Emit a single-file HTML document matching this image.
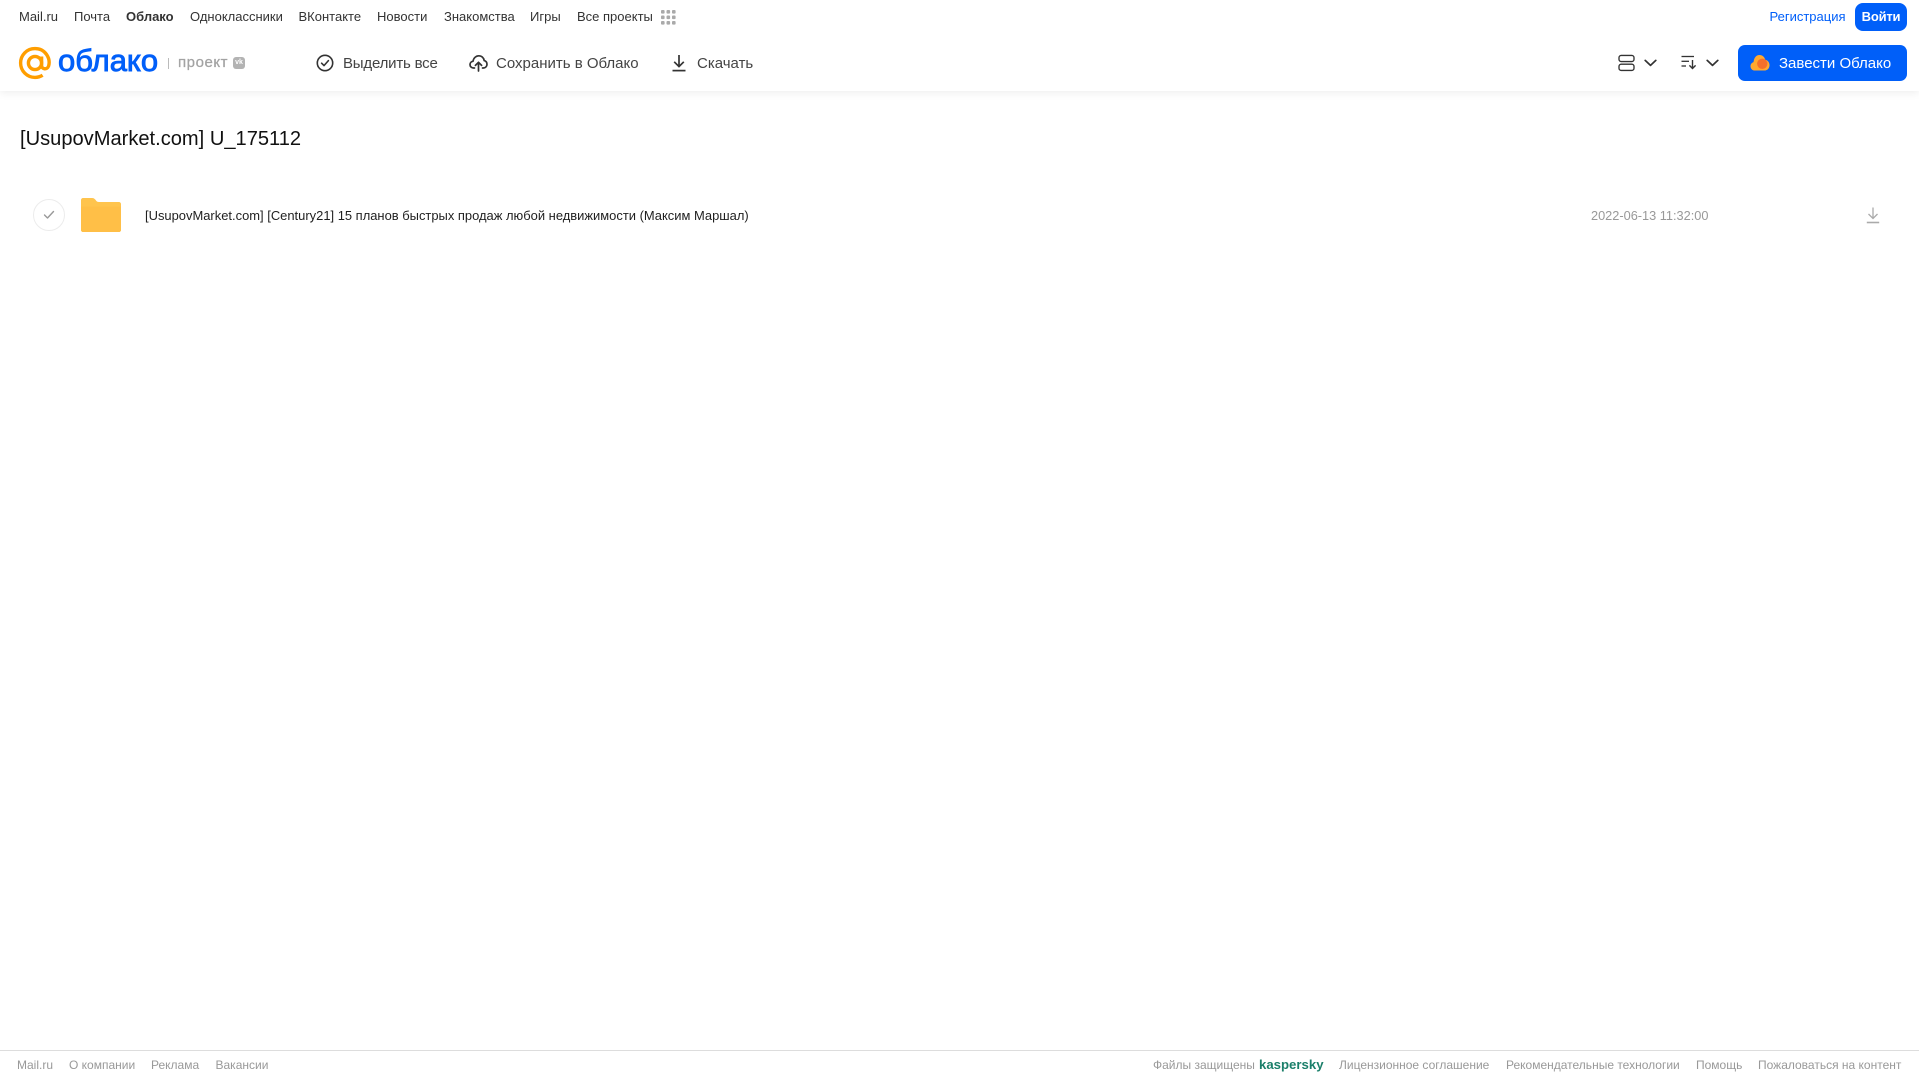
<!DOCTYPE html>
<html lang="ru">
<head>
<meta charset="utf-8">
<title>Облако</title>
<style>
html,body{margin:0;padding:0;background:#fff;}
body{width:1919px;height:1079px;position:relative;overflow:hidden;font-family:"Liberation Sans",Arial,sans-serif;}
.t{position:absolute;white-space:nowrap;line-height:20px;}
.n{font-size:13px;color:#333;top:7px;}
.a{font-size:15px;color:#444;top:54px;}
.f{font-size:12px;color:#999;top:1055px;}
svg{position:absolute;display:block;}
#hdr{position:absolute;left:0;top:0;width:1919px;height:91px;background:#fff;box-shadow:0 2px 8px rgba(0,0,0,.07);}
#ft{position:absolute;left:0;top:1050px;width:1919px;height:29px;border-top:1px solid #ddd;box-sizing:border-box;}
</style>
</head>
<body>
<div id="hdr"></div>

<div class="t n" style="left:19px">Mail.ru</div>
<div class="t n" style="left:74px">Почта</div>
<div class="t n" style="left:126px;font-weight:bold">Облако</div>
<div class="t n" style="left:190px">Одноклассники</div>
<div class="t n" style="left:298.5px">ВКонтакте</div>
<div class="t n" style="left:377px">Новости</div>
<div class="t n" style="left:444px">Знакомства</div>
<div class="t n" style="left:530px">Игры</div>
<div class="t n" style="left:577px">Все проекты</div>
<svg style="left:661px;top:10px" width="15" height="15" viewBox="0 0 15 15" fill="#aaa">
<rect x="0" y="0" width="3.6" height="3.6" rx="1"/><rect x="5.5" y="0" width="3.6" height="3.6" rx="1"/><rect x="11" y="0" width="3.6" height="3.6" rx="1"/>
<rect x="0" y="5.5" width="3.6" height="3.6" rx="1"/><rect x="5.5" y="5.5" width="3.6" height="3.6" rx="1"/><rect x="11" y="5.5" width="3.6" height="3.6" rx="1"/>
<rect x="0" y="11" width="3.6" height="3.6" rx="1"/><rect x="5.5" y="11" width="3.6" height="3.6" rx="1"/><rect x="11" y="11" width="3.6" height="3.6" rx="1"/>
</svg>

<div class="t n" style="left:1769.5px;color:#005ff9">Регистрация</div>
<div style="position:absolute;left:1855px;top:3px;width:52px;height:28px;border-radius:8px;background:#005ff9;color:#fff;font-size:13px;font-weight:bold;letter-spacing:-.2px;line-height:28px;text-align:center">Войти</div>

<svg style="left:18px;top:46px" width="34" height="34" viewBox="0 0 34 34" fill="none" stroke="#ff9e00" stroke-width="3.4">
<circle cx="17" cy="17" r="6.6"/>
<path d="M23.6 10.5V19.5C23.6 23.5 29.2 24 30.6 20C32.8 12.5 27.5 2.6 17 2.6C8.9 2.6 2.6 9 2.6 17C2.6 25 9 31.4 17 31.4C20 31.4 22.5 30.6 24.6 29.2"/>
</svg>
<div class="t" style="left:58px;top:45px;font-size:31px;line-height:32px;color:#005ff9;-webkit-text-stroke:.9px #005ff9">облако</div>
<div style="position:absolute;left:168px;top:58px;width:1px;height:11px;background:#bbb"></div>
<div class="t" style="left:178px;top:53px;font-size:15px;color:#a3a3a3;letter-spacing:.55px;-webkit-text-stroke:.25px #a3a3a3">проект</div>
<div style="position:absolute;left:233px;top:57px;width:12px;height:12px;border-radius:3px;background:#b3b3b3;color:#fff;font-size:7px;font-weight:bold;line-height:12px;text-align:center">vk</div>

<svg style="left:316px;top:54px" width="18" height="18" viewBox="0 0 18 18" fill="none" stroke="#333" stroke-width="1.6">
<circle cx="9" cy="9" r="7.7"/><path d="M5.6 9.2L8 11.6L12.4 6.6" stroke-linecap="round" stroke-linejoin="round"/>
</svg>
<div class="t a" style="left:343px;letter-spacing:-.2px">Выделить все</div>

<svg style="left:469px;top:54px" width="19" height="18" viewBox="0 0 19 18" fill="none" stroke="#333" stroke-width="1.7" stroke-linecap="round" stroke-linejoin="round">
<path d="M5.5 14H4.6C2.5 14 1 12.5 1 10.6C1 8.8 2.4 7.5 4 7.3C4.5 4 7 1.8 9.8 1.8C12.6 1.8 14.8 3.8 15.2 6.6C16.9 7.1 18 8.6 18 10.3C18 12.4 16.4 14 14.3 14H13.5"/>
<path d="M9.5 17V8.5M6.4 11.4L9.5 8.3L12.6 11.4"/>
</svg>
<div class="t a" style="left:496px">Сохранить в Облако</div>

<svg style="left:672px;top:54px" width="14" height="18" viewBox="0 0 14 18" fill="none" stroke="#333" stroke-width="1.7">
<path d="M7 1V12.5M2.2 7.8L7 12.6L11.8 7.8"/><path d="M.5 16.6H13.5"/>
</svg>
<div class="t a" style="left:697px">Скачать</div>

<svg style="left:1618px;top:54px" width="17" height="18" viewBox="0 0 17 18" fill="none" stroke="#333" stroke-width="1.35">
<rect x="1" y="1.4" width="15" height="6.2" rx="2.2"/><rect x="1" y="10.2" width="15" height="6.2" rx="2.2"/>
</svg>
<svg style="left:1643.5px;top:59px" width="13" height="8" viewBox="0 0 13 8" fill="none" stroke="#333" stroke-width="1.7" stroke-linecap="round" stroke-linejoin="round"><path d="M1.2 1.4L6.5 6.4L11.8 1.4"/></svg>
<svg style="left:1681px;top:55px" width="17" height="15" viewBox="0 0 17 15" fill="none" stroke="#333" stroke-width="1.3">
<path d="M.5 1.5H13"/><path d="M.5 6.3H8"/><path d="M.5 11H5"/><path d="M11.5 5V13.4M8.4 10.4L11.5 13.5L14.6 10.4" stroke-width="1.4"/>
</svg>
<svg style="left:1706px;top:59px" width="13" height="8" viewBox="0 0 13 8" fill="none" stroke="#333" stroke-width="1.7" stroke-linecap="round" stroke-linejoin="round"><path d="M1.2 1.4L6.5 6.4L11.8 1.4"/></svg>

<div style="position:absolute;left:1738px;top:45px;width:169px;height:36px;border-radius:7px;background:#005ff9"></div>
<svg style="left:1750px;top:54px" width="20" height="17" viewBox="0 0 20 17">
<path d="M5 16.5C2.2 16.5.5 14.6.5 12.2C.5 10.2 1.8 8.6 3.5 8.1C4 4 6 1 9.5 1C12.4 1 14.6 3 15.2 5.8C17.8 6.3 19.5 8.5 19.5 11.2C19.5 14.4 17.2 16.5 14.4 16.5Z" fill="#ffa930"/>
<circle cx="12.3" cy="9.8" r="5.2" fill="#f4702c"/>
</svg>
<div class="t" style="left:1779px;top:54px;font-size:15px;color:#fff">Завести Облако</div>

<div class="t" style="left:20px;top:127px;font-size:20.1px;line-height:24px;color:#111">[UsupovMarket.com] U_175112</div>

<div style="position:absolute;left:33px;top:199px;width:32px;height:32px;border:1px solid #ececec;border-radius:50%;box-sizing:border-box"></div>
<svg style="left:43px;top:210px" width="12" height="10" viewBox="0 0 12 10" fill="none" stroke="#999" stroke-width="1.4" stroke-linecap="round" stroke-linejoin="round"><path d="M1.5 5L4.5 8L10.5 1.5"/></svg>

<svg style="left:81px;top:198px" width="40" height="34" viewBox="0 0 40 34">
<path d="M2 0H11C13 0 14 1 15 2.5C15.6 3.5 16.5 4 18 4H38C39.1 4 40 4.9 40 6V32C40 33.1 39.1 34 38 34H2C.9 34 0 33.1 0 32V2C0 .9.9 0 2 0Z" fill="#ffc44d"/>
<path d="M0 8.5H40V32C40 33.1 39.1 34 38 34H2C.9 34 0 33.1 0 32Z" fill="#ffbf47"/>
</svg>

<div class="t" style="left:145px;top:206px;font-size:12.94px;color:#1f1f1f">[UsupovMarket.com] [Century21] 15 планов быстрых продаж любой недвижимости (Максим Маршал)</div>
<div class="t" style="left:1591px;top:206px;font-size:12.75px;color:#999">2022-06-13 11:32:00</div>
<svg style="left:1866px;top:206px" width="14" height="18" viewBox="0 0 14 18" fill="none" stroke="#aaa" stroke-width="1.3">
<path d="M7 1.5V12.5M2.5 8L7 12.5L11.5 8"/><path d="M.8 16.5H13.2" stroke-width="1.6"/>
</svg>

<div id="ft"></div>
<div class="t f" style="left:17px">Mail.ru</div>
<div class="t f" style="left:69px">О компании</div>
<div class="t f" style="left:151px">Реклама</div>
<div class="t f" style="left:215.5px">Вакансии</div>
<div class="t f" style="left:1153px">Файлы защищены</div>
<div class="t f" style="left:1259px;font-size:13.2px;font-weight:bold;color:#1b7f6a">kaspersky</div>
<div class="t f" style="left:1339px">Лицензионное соглашение</div>
<div class="t f" style="left:1506px">Рекомендательные технологии</div>
<div class="t f" style="left:1696px">Помощь</div>
<div class="t f" style="left:1758px">Пожаловаться на контент</div>
</body>
</html>
